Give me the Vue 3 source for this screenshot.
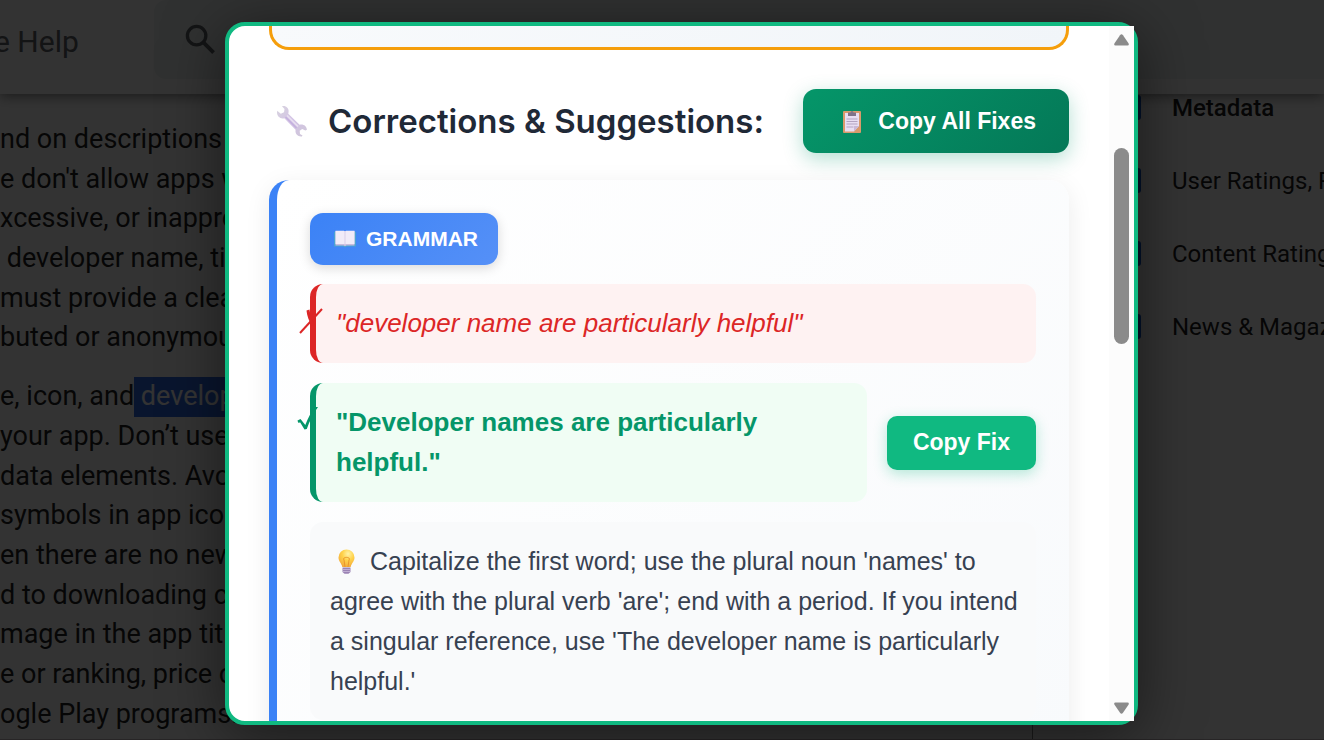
<script setup>
const firstParagraph = [
  'nd on descriptions or',
  "e don't allow apps with",
  'xcessive, or inapprop',
  ' developer name, title',
  'must provide a clear',
  'buted or anonymous',
]
const secondParagraph = [
  { text: 'e, icon, and', selected: ' developer' },
  { text: 'your app. Don’t use' },
  { text: 'data elements. Avoid' },
  { text: 'symbols in app icons' },
  { text: 'en there are no new' },
  { text: 'd to downloading co' },
  { text: 'mage in the app title' },
  { text: 'e or ranking, price or' },
  { text: 'ogle Play programs.' },
]
const topics = ['Metadata', 'User Ratings, Reviews', 'Content Ratings', 'News & Magazines']
</script>

<template>
  <div class="screen">
    <div class="page">
      <header class="topbar">
        <span class="brand">e Help</span>
        <div class="search">
          <svg class="search-icon" viewBox="0 0 32 32" aria-hidden="true">
            <circle cx="12" cy="12" r="9.500" fill="none" stroke="#5f6368" stroke-width="3.400" />
            <path d="M18.500 18.500 29.500 29.500" stroke="#5f6368" stroke-width="4" />
          </svg>
        </div>
      </header>
      <main class="body">
        <article class="article">
          <p>
            <span v-for="line in firstParagraph" :key="line" class="line">{{ line }}</span>
          </p>
          <p>
            <span v-for="line in secondParagraph" :key="line.text" class="line">{{ line.text }}<mark v-if="line.selected">{{ line.selected }}</mark></span>
          </p>
        </article>
        <nav class="topics">
          <a v-for="(topic, i) in topics" :key="topic" href="#" :class="{ current: i === 0 }">
            <i class="chip"></i>{{ topic }}
          </a>
        </nav>
      </main>
    </div>

    <div class="overlay">
      <section class="modal" role="dialog" aria-labelledby="corrections-title">
        <div class="content">
          <div class="summary"></div>
          <div class="heading">
            <h2 id="corrections-title">
              <svg class="wrench" viewBox="0 0 32 32" aria-hidden="true">
                <defs>
                  <linearGradient id="metal" x1="0" y1="0" x2="1" y2="1">
                    <stop offset="0" stop-color="#d8d5de" />
                    <stop offset=".5" stop-color="#d3c2e6" />
                    <stop offset="1" stop-color="#cfc8d8" />
                  </linearGradient>
                </defs>
                <path fill="url(#metal)" d="M6 1.2C9.6.2 13 3 12.6 6.8l-.3 1.9 11.300 11c3.600-1 7.200 1.300 7.300 5.100l-1.500.8-3.200-1.700-2.500 1.800.3 3.200 2.500 1.600-.6 1c-4 .5-7.200-2.800-6.300-6.700L8.300 13.200C4.400 14.300 1 11.500 1 7.600l.2-1.800 3.600 2.900 3.200-1.400.5-3.400z" />
                <path d="m11 10.500 11 11" stroke="#e9e0f1" stroke-width="1.500" />
                <path d="m9.500 12 11 11" stroke="#c3aede" stroke-width="1.200" />
              </svg>
              Corrections &amp; Suggestions:
            </h2>
            <button type="button" class="copy-all">
              <svg class="clipboard" viewBox="0 0 18 23" aria-hidden="true">
                <rect y="1" width="18" height="22" rx="1" fill="#d99a6c" />
                <path fill="#e8def2" d="M2 3h14v13l-5 5.500H2z" />
                <path fill="#c9b8d8" d="M11 16h5l-5 5.500z" />
                <path fill="#7f7389" d="M5 2.500h2.500a1.500 1.500 0 0 1 3 0H13V6H5z" />
                <path d="M3.500 9h11M3.500 11.500h11M3.500 14h11M3.500 17h7" stroke="#b3a4c2" stroke-width="1" />
              </svg>
              Copy All Fixes
            </button>
          </div>

          <article class="card">
            <span class="badge">
              <svg class="book" viewBox="0 0 22 18" aria-hidden="true">
                <path fill="#4aa3cf" d="M0 2h22v14.500h-9.500l-1.500 1-1.500-1H0z" />
                <path fill="#c9bbdc" d="M1.500 1h19v14.500h-8l-1.500.8-1.500-.8h-8z" />
                <path fill="#f1ebf8" d="M1.500.8H10l.7.700v13l-.9-.5H1.500zM20.500.8H12l-.7.700v13l.9-.5h8.300z" />
              </svg>
              GRAMMAR
            </span>
            <div class="wrong">
              <svg class="cross" viewBox="0 0 24 26" aria-hidden="true">
                <path d="M1 25 23 1" fill="none" stroke="#dc2626" stroke-width="2" />
                <path d="M7.500 2.500 10.500 1.500C11 7 13 12 15.500 16.500L13 18C10 13 8 8 7.500 2.500z" fill="#dc2626" />
              </svg>
              "developer name are particularly helpful"
            </div>
            <div class="fix-row">
              <div class="right">
                <svg class="check" viewBox="0 0 22 24" aria-hidden="true">
                  <path d="M.5 14.500 3.500 13 8.300 19C11 12 14 6 18.500 1L21 1C16 8 12.500 15 9.800 23L7.500 23.500 3.200 16.500 1.200 16.800z" fill="#059669" />
                </svg>
                "Developer names are particularly helpful."
              </div>
              <button type="button" class="copy-one">Copy Fix</button>
            </div>
            <p class="explanation">
              <svg class="bulb" viewBox="0 0 17 25" aria-hidden="true">
                <defs>
                  <radialGradient id="glow" cx=".6" cy=".25" r=".8">
                    <stop offset="0" stop-color="#fff3a8" />
                    <stop offset=".45" stop-color="#ffd24a" />
                    <stop offset="1" stop-color="#f2a73c" />
                  </radialGradient>
                </defs>
                <path fill="url(#glow)" d="M8.500.5a8 8 0 0 1 8 8c0 4-3 5.500-3.800 9.500H4.300C3.500 14 .5 12.500.5 8.500a8 8 0 0 1 8-8z" />
                <path d="M7 18 6 11c-2.500-3.500 7.500-3.500 5 0l-1 7" fill="none" stroke="#e9962b" stroke-width="1" />
                <path fill="#9b83b4" d="M4.500 18.500h8V23l-2 1.800h-4l-2-1.800z" />
                <path d="M4.500 20.500h8M5 22.500h7" stroke="#c9b9da" stroke-width=".8" />
              </svg>
              Capitalize the first word; use the plural noun 'names' to agree with the plural verb 'are'; end with a period. If you intend a singular reference, use 'The developer name is particularly helpful.'
            </p>
          </article>
        </div>
        <div class="scrollbar" aria-hidden="true">
          <svg class="arrow" viewBox="0 0 15 12"><path d="M6 1.200q1.500-1.700 3 0l5.500 8q1 2.300-1 2.300h-12q-2 0-1-2.300z" fill="#8b8b8b" /></svg>
          <div class="track"><div class="thumb"></div></div>
          <svg class="arrow" viewBox="0 0 15 12"><path d="M6 10.800q1.500 1.700 3 0l5.500-8q1-2.300-1-2.300h-12q-2 0-1 2.300z" fill="#8b8b8b" /></svg>
        </div>
      </section>
    </div>
  </div>
</template>

<style>
body {
  background: #fff;
}
</style>

<style scoped>
.screen,
.screen * {
  box-sizing: border-box;
}
.screen {
  position: relative;
  height: 100vh;
  overflow: hidden;
  font-family: "Liberation Sans", Arial, sans-serif;
}
.page {
  display: flex;
  flex-direction: column;
  height: 100%;
  overflow: hidden;
  border-bottom: 1px solid #c4b8bc;
  background: #fff;
  color: #1f1f1f;
  font-family: Roboto, "Open Sans", sans-serif;
}
.topbar {
  position: relative;
  display: flex;
  flex: none;
  height: 94px;
  padding-bottom: 15px;
  background: #fff;
  box-shadow: 0 2px 12px rgba(0, 0, 0, 0.5);
}
.brand {
  width: 160px;
  margin-left: -6px;
  padding-top: 6px;
  color: #5f6368;
  font-size: 30px;
  line-height: 72px;
}
.search {
  flex: 1;
  padding: 24px 31px;
  border-radius: 12px 0 0 12px;
  background: #f0f4f3;
}
.search-icon {
  width: 31px;
  height: 31px;
}
.body {
  display: flex;
  flex: 1;
  min-height: 0;
}
.article {
  flex: 1;
  min-width: 0;
  padding-top: 26px;
  border-right: 1px solid #888;
}
.article p {
  margin: 0 0 19px;
  font-size: 27px;
  line-height: 1.47;
}
.line {
  display: block;
  white-space: pre;
}
mark {
  display: inline-block;
  background: #2f6be6;
  color: #fff;
}
.topics {
  display: flex;
  flex-direction: column;
  width: 291px;
  margin-top: -23px;
  padding-left: 83px;
}
.topics a {
  display: flex;
  flex: none;
  align-items: center;
  gap: 31px;
  height: 73px;
  color: #1f1f1f;
  font-size: 24px;
  text-decoration: none;
  white-space: nowrap;
}
.topics .current {
  font-weight: 500;
}
.chip {
  flex: none;
  width: 25px;
  height: 25px;
  border-radius: 3px;
  background: #0b57d0;
}
.overlay {
  position: absolute;
  inset: 0;
  display: flex;
  padding: 22px 186px 15px 225px;
  background: rgba(0, 0, 0, 0.8);
}
.modal {
  flex: 1;
  display: flex;
  min-width: 0;
  border: 4px solid #10b981;
  border-radius: 20px;
  background: #fff;
  box-shadow: 0 10px 60px rgba(0, 0, 0, 0.5);
}
.content {
  flex: 1;
  min-width: 0;
  padding: 0 40px;
  overflow: hidden;
  border-radius: 16px 0 0 16px;
}
.summary {
  height: 24px;
  border: 3px solid #f59e0b;
  border-top: 0;
  border-radius: 0 0 20px 20px;
  background: linear-gradient(135deg, #f8fafc, #f1f5f9);
}
.heading {
  display: flex;
  align-items: center;
  justify-content: space-between;
  margin: 39px 0 27px;
}
h2 {
  display: flex;
  align-items: center;
  gap: 20px;
  margin: 0;
  padding-left: 7px;
  color: #1f2937;
  font-family: Inter, sans-serif;
  font-size: 33px;
  font-weight: 600;
  line-height: 44px;
  white-space: nowrap;
}
.wrench {
  width: 32px;
  height: 32px;
}
button {
  flex: none;
  border: 0;
  color: #fff;
  font-family: inherit;
  font-size: 23px;
  font-weight: 700;
}
.copy-all {
  display: flex;
  align-items: center;
  gap: 17px;
  height: 64px;
  padding: 0 33px 0 40px;
  border-radius: 13px;
  background: linear-gradient(135deg, #059669, #047857);
  box-shadow: 0 6px 20px rgba(5, 150, 105, 0.3);
}
.clipboard {
  width: 18px;
  height: 23px;
}
.card {
  padding: 33px;
  border-left: 8px solid #3b82f6;
  border-radius: 20px;
  background: linear-gradient(135deg, #fff, #f8fafc);
  box-shadow: 0 6px 26px rgba(0, 0, 0, 0.08);
}
.badge {
  display: inline-flex;
  align-items: center;
  gap: 10px;
  height: 52px;
  padding: 0 20px 0 24px;
  border-radius: 13px;
  background: linear-gradient(135deg, #3b82f6, #5590f7);
  box-shadow: 0 3px 12px rgba(0, 0, 0, 0.15);
  color: #fff;
  font-size: 21px;
  font-weight: 700;
  vertical-align: top;
}
.book {
  width: 22px;
  height: 18px;
}
.wrong,
.right {
  position: relative;
  padding: 19px 20px 20px;
  border-left: 6px solid;
  border-radius: 13px;
  font-size: 26px;
  line-height: 40px;
}
.wrong {
  margin-top: 19px;
  border-color: #dc2626;
  background: #fef2f2;
  color: #dc2626;
  font-style: italic;
}
.right {
  flex: 1;
  border-color: #059669;
  background: #f0fdf4;
  color: #059669;
  font-weight: 700;
}
.cross {
  position: absolute;
  top: 24px;
  left: -17px;
  width: 24px;
  height: 26px;
}
.check {
  position: absolute;
  top: 23px;
  left: -19px;
  width: 22px;
  height: 24px;
}
.fix-row {
  display: flex;
  align-items: center;
  gap: 20px;
  margin: 20px 0;
}
.copy-one {
  height: 54px;
  padding: 0 26px;
  border-radius: 10px;
  background: #10b981;
  box-shadow: 0 4px 14px rgba(16, 185, 129, 0.3);
}
.explanation {
  margin: 0;
  padding: 19px 16px 19px 20px;
  border-radius: 13px;
  background: #f9fafb;
  color: #374151;
  font-size: 25px;
  line-height: 40px;
}
.bulb {
  width: 17px;
  height: 25px;
  margin: 0 8px;
  vertical-align: -4px;
}
.scrollbar {
  display: flex;
  flex-direction: column;
  align-items: center;
  width: 25px;
  padding: 8px 0 7px;
  background: #fcfcfc;
}
.arrow {
  width: 15px;
  height: 12px;
}
.track {
  flex: 1;
  padding-top: 102px;
}
.thumb {
  width: 15px;
  height: 34%;
  min-height: 196px;
  border-radius: 8px;
  background: #8b8b8b;
}
</style>
